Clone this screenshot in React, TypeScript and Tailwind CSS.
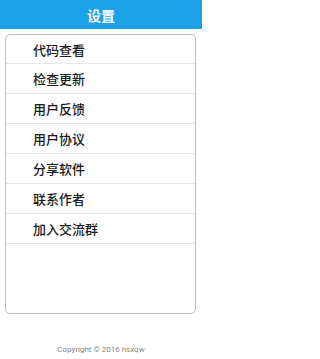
const items = ["代码查看", "检查更新", "用户反馈", "用户协议", "分享软件", "联系作者", "加入交流群"]

export default function App() {
  return (
    <div
      className="w-[202px] h-[359px] bg-white flex flex-col overflow-hidden"
      style={{ fontFamily: '"Noto Sans CJK SC", "Noto Sans", sans-serif' }}
    >
      <div className="h-[29px] shrink-0 bg-[#1ba1e5] flex items-center justify-center">
        <span className="text-white text-[14px] font-bold leading-none">设置</span>
      </div>
      <div className="ml-[5px] mr-[6px] mt-[5px] h-[280px] border border-[#bdbdbd] rounded-[5px] flex flex-col">
        {items.map((item, i) => (
          <div
            key={i}
            className={`${i === 0 ? "h-[29px]" : "h-[30px]"} border-b border-[#e6e6e6] flex items-center pl-[27px] text-[13px] font-medium text-[#1a1a1a] leading-none`}
          >
            {item}
          </div>
        ))}
      </div>
      <div
        className="mt-[30px] text-center text-[8px] text-[#888] leading-[11px]"
        style={{ fontFamily: 'Roboto, "Liberation Sans", sans-serif' }}
      >
        Copyright © 2016 hsxqw
      </div>
    </div>
  )
}
